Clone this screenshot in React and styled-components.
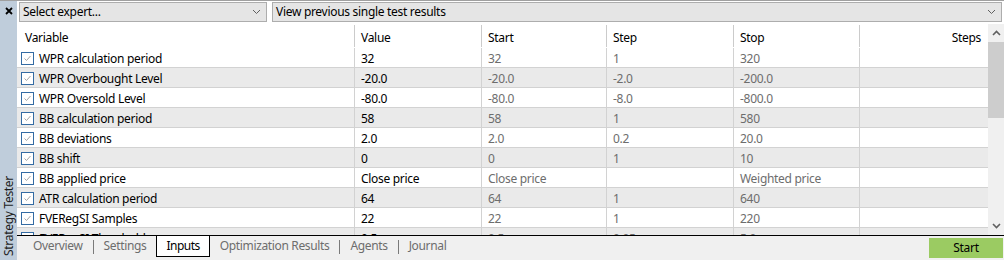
import React from 'react'
import styled, { createGlobalStyle } from 'styled-components'

const GlobalStyle = createGlobalStyle`
  html, body {
    margin: 0;
    padding: 0;
    background: #ffffff;
  }
  body {
    font-family: "Segoe UI", "Noto Sans", sans-serif;
    font-size: 12px;
    letter-spacing: -0.3px;
    color: #000000;
  }
`

const rows = [
  ['WPR calculation period', '32', '32', '1', '320'],
  ['WPR Overbought Level', '-20.0', '-20.0', '-2.0', '-200.0'],
  ['WPR Oversold Level', '-80.0', '-80.0', '-8.0', '-800.0'],
  ['BB calculation period', '58', '58', '1', '580'],
  ['BB deviations', '2.0', '2.0', '0.2', '20.0'],
  ['BB shift', '0', '0', '1', '10'],
  ['BB applied price', 'Close price', 'Close price', '', 'Weighted price'],
  ['ATR calculation period', '64', '64', '1', '640'],
  ['FVERegSI Samples', '22', '22', '1', '220'],
  ['FVERegSI Threshold', '0.5', '0.5', '0.05', '5.0'],
]

const tabs = ['Overview', 'Settings', 'Inputs', 'Optimization Results', 'Agents', 'Journal']
const activeTab = 'Inputs'

const COLS = '337px 127px 125px 127px 126px 1fr'

const Window = styled.div`
  display: flex;
  width: 1004px;
  height: 260px;
  box-sizing: border-box;
  border-top: 1px solid #a0a0a0;
  overflow: hidden;
`

const SideStrip = styled.div`
  width: 17px;
  flex: none;
  background: #bfcddb;
  display: flex;
  flex-direction: column;
  justify-content: space-between;
  align-items: center;
`

const CloseBtn = styled.div`
  display: flex;
  align-items: center;
  justify-content: center;
  width: 17px;
  height: 20px;
`

const SideLabel = styled.div`
  writing-mode: vertical-rl;
  transform: rotate(180deg);
  color: #1e1e1e;
  line-height: 15px;
  padding-top: 4px;
  white-space: nowrap;
`

const Main = styled.div`
  flex: 1;
  min-width: 0;
  display: flex;
  flex-direction: column;
`

const TopBar = styled.div`
  height: 23px;
  flex: none;
  display: flex;
  align-items: flex-start;
  gap: 5px;
  padding: 1px 2px 0 2px;
  box-sizing: border-box;
`

const Combo = styled.div`
  width: ${({ width }) => (width ? `${width}px` : 'auto')};
  flex: ${({ width }) => (width ? 'none' : '1')};
  height: 20px;
  box-sizing: border-box;
  border: 1px solid #adadad;
  background: #e5e5e5;
  display: flex;
  align-items: center;
  justify-content: space-between;
  padding: 0 5px 0 3px;
  line-height: 18px;
`

const Grid = styled.div`
  flex: 1;
  min-height: 0;
  display: flex;
  overflow: hidden;
`

const Table = styled.div`
  flex: 1;
  min-width: 0;
  display: flex;
  flex-direction: column;
`

const HeaderRow = styled.div`
  display: grid;
  grid-template-columns: ${COLS};
  height: 24px;
  flex: none;
  padding-top: 1px;
  box-sizing: border-box;
`

const HeadCell = styled.div`
  border-left: ${({ first }) => (first ? 'none' : '1px solid #cbcbcb')};
  padding: ${({ first }) => (first ? '2px 0 0 8px' : '2px 7px 0 6px')};
  text-align: ${({ right }) => (right ? 'right' : 'left')};
  line-height: 21px;
  height: 22px;
  box-sizing: border-box;
`

const Row = styled.div`
  display: grid;
  grid-template-columns: ${COLS};
  height: 20px;
  flex: none;
  box-sizing: border-box;
  border-bottom: 1px solid #d2d2d2;
  background: ${({ shaded }) => (shaded ? '#eaeaea' : '#ffffff')};
`

const NameCell = styled.div`
  display: flex;
  align-items: center;
  gap: 5px;
  padding-left: 4px;
  white-space: nowrap;
`

const NameText = styled.span`
  padding-top: 2px;
`

const Cell = styled.div`
  border-left: 1px solid #d2d2d2;
  padding: 2px 0 0 6px;
  line-height: 17px;
  white-space: nowrap;
  overflow: hidden;
  color: ${({ dim }) => (dim ? '#6d6d6d' : '#000000')};
`

const Check = styled.div`
  width: 13px;
  height: 13px;
  box-sizing: border-box;
  border: 1px solid #336ba3;
  background: #ffffff;
  display: flex;
  align-items: center;
  justify-content: center;
  flex: none;
  margin-top: 1px;
`

const ScrollBar = styled.div`
  width: 16px;
  flex: none;
  background: #f0f0f0;
  display: flex;
  flex-direction: column;
  align-items: center;
`

const ScrollArrow = styled.div`
  height: ${({ h }) => h}px;
  width: 16px;
  display: flex;
  align-items: center;
  justify-content: center;
  flex: none;
`

const Thumb = styled.div`
  width: 16px;
  height: 76px;
  background: #cdcdcd;
  flex: none;
`

const Spacer = styled.div`
  flex: 1;
`

const TabBar = styled.div`
  height: 25px;
  flex: none;
  box-sizing: border-box;
  border-top: 1px solid #000000;
  background: #f0f0f0;
  display: flex;
  align-items: flex-start;
  padding-left: 6px;
`

const Tab = styled.div`
  height: 21px;
  line-height: 19px;
  padding: 0 9px;
  box-sizing: border-box;
  color: ${({ active }) => (active ? '#000000' : '#6d6d6d')};
  background: ${({ active }) => (active ? '#ffffff' : 'transparent')};
  border: 1px solid ${({ active }) => (active ? '#000000' : 'transparent')};
  border-top: none;
  white-space: nowrap;
  letter-spacing: ${({ active }) => (active ? '-0.5px' : '-0.35px')};
`

const TabSep = styled.div`
  width: 1px;
  height: 14px;
  margin-top: 4px;
  background: #7a7a7a;
  flex: none;
`

const StartButton = styled.div`
  margin-left: auto;
  margin-top: 2px;
  margin-right: 1px;
  width: 74px;
  height: 20px;
  background: #9bcb62;
  color: #000000;
  text-align: center;
  line-height: 19px;
`

const Chevron = ({ up }) => (
  <svg width="9" height="6" viewBox="0 0 9 6">
    <polyline
      points={up ? '1,5 4.5,1.5 8,5' : '1,1 4.5,4.5 8,1'}
      fill="none"
      stroke="#606060"
      strokeWidth={up ? 1.6 : 1}
    />
  </svg>
)

const CheckMark = () => (
  <svg width="9" height="9" viewBox="0 0 9 9">
    <polyline points="1.5,4.5 3.5,6.5 7.5,2" fill="none" stroke="#a3a3a3" strokeWidth="1" />
  </svg>
)

const TabStrip = () => {
  const items = []
  tabs.forEach((t, i) => {
    if (i > 0) {
      const prev = tabs[i - 1]
      if (prev !== activeTab && t !== activeTab) items.push(<TabSep key={`s${i}`} />)
    }
    items.push(
      <Tab key={t} active={t === activeTab}>
        {t}
      </Tab>
    )
  })
  return items
}

export default function App() {
  return (
    <>
      <GlobalStyle />
      <Window>
        <SideStrip>
          <CloseBtn>
            <svg width="8" height="8" viewBox="0 0 8 8">
              <path d="M1 1 L7 7 M7 1 L1 7" stroke="#000" strokeWidth="1.8" />
            </svg>
          </CloseBtn>
          <SideLabel>Strategy Tester</SideLabel>
        </SideStrip>
        <Main>
          <TopBar>
            <Combo width={248}>
              <span>Select expert...</span>
              <Chevron />
            </Combo>
            <Combo>
              <span>View previous single test results</span>
              <Chevron />
            </Combo>
          </TopBar>
          <Grid>
            <Table>
              <HeaderRow>
                <HeadCell first>Variable</HeadCell>
                <HeadCell>Value</HeadCell>
                <HeadCell>Start</HeadCell>
                <HeadCell>Step</HeadCell>
                <HeadCell>Stop</HeadCell>
                <HeadCell right>Steps</HeadCell>
              </HeaderRow>
              {rows.map((r, i) => (
                <Row key={r[0]} shaded={i % 2 === 1}>
                  <NameCell>
                    <Check>
                      <CheckMark />
                    </Check>
                    <NameText>{r[0]}</NameText>
                  </NameCell>
                  <Cell>{r[1]}</Cell>
                  <Cell dim>{r[2]}</Cell>
                  <Cell dim>{r[3]}</Cell>
                  <Cell dim>{r[4]}</Cell>
                  <Cell />
                </Row>
              ))}
            </Table>
            <ScrollBar>
              <ScrollArrow h={18}>
                <Chevron up />
              </ScrollArrow>
              <Thumb />
              <Spacer />
              <ScrollArrow h={18}>
                <svg width="9" height="6" viewBox="0 0 9 6">
                  <polyline points="1,1 4.5,4.5 8,1" fill="none" stroke="#606060" strokeWidth="1.6" />
                </svg>
              </ScrollArrow>
            </ScrollBar>
          </Grid>
          <TabBar>
            <TabStrip />
            <StartButton>Start</StartButton>
          </TabBar>
        </Main>
      </Window>
    </>
  )
}
